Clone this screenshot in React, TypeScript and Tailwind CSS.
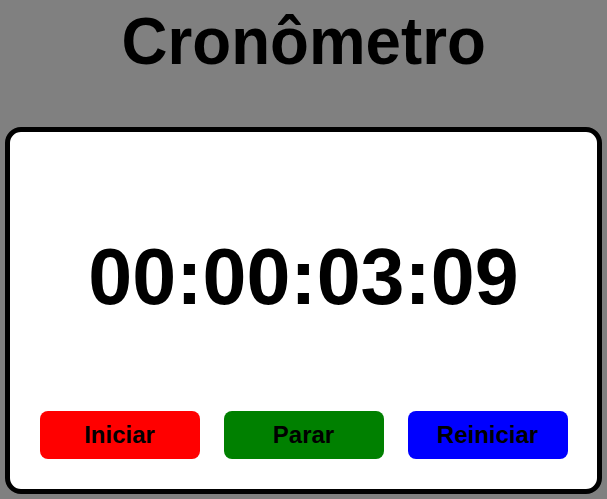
import React from "react";

const buttons = [
  { label: "Iniciar", className: "bg-[#ff0000]" },
  { label: "Parar", className: "bg-[#008000]" },
  { label: "Reiniciar", className: "bg-[#0000ff]" },
];

export default function App() {
  return (
    <div
      className="min-h-screen bg-[#808080] pt-[4px]"
      style={{ fontFamily: '"Liberation Sans", Arial, sans-serif' }}
    >
      <h1 className="text-center text-[67px] font-bold leading-[74px] text-black">
        <span className="inline-block scale-x-95">Cronômetro</span>
      </h1>

      <div className="mx-[5px] mt-[49px] flex h-[367px] flex-col rounded-[16px] border-[5px] border-black bg-white">
        {/* Display */}
        <div className="flex flex-1 items-center justify-center pt-[12px]">
          <span className="text-[79px] font-bold text-black">00:00:03:09</span>
        </div>

        {/* Controls */}
        <div className="flex justify-center gap-[24px] pb-[30px]">
          {buttons.map((b) => (
            <button
              key={b.label}
              className={`h-[48px] w-[160px] rounded-[8px] text-[24px] font-bold text-black ${b.className}`}
            >
              {b.label}
            </button>
          ))}
        </div>
      </div>
    </div>
  );
}
